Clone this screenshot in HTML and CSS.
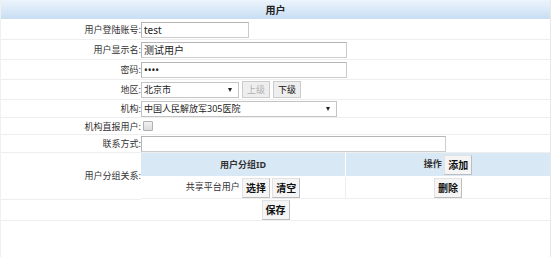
FILE: index.html
```html
<!DOCTYPE html>
<html lang="zh">
<head>
  <meta charset="UTF-8" />
  <title>用户</title>
  <link rel="stylesheet" href="styles.css">
</head>
<body>

  <!-- Benutzerformular -->
  <div class="panel">
    <table class="form-table">
      <tr class="head">
        <th colspan="2">用户</th>
      </tr>
      <tr class="r20">
        <td class="label">用户登陆账号:</td>
        <td><input type="text" class="inp w108" value="test" /></td>
      </tr>
      <tr class="r20">
        <td class="label">用户显示名:</td>
        <td><input type="text" class="inp w206" value="测试用户" /></td>
      </tr>
      <tr class="r20">
        <td class="label">密码:</td>
        <td><input type="password" class="inp w206" value="test" /></td>
      </tr>
      <tr class="r20">
        <td class="label">地区:</td>
        <td>
          <div class="line">
            <span class="sel w98"><select><option>北京市</option></select></span>
            <button type="button" class="btn light" disabled>上级</button>
            <button type="button" class="btn light">下级</button>
          </div>
        </td>
      </tr>
      <tr class="r18">
        <td class="label">机构:</td>
        <td><span class="sel w196"><select><option>中国人民解放军305医院</option></select></span></td>
      </tr>
      <tr class="r17">
        <td class="label">机构直报用户:</td>
        <td><span class="check"></span></td>
      </tr>
      <tr class="r18">
        <td class="label">联系方式:</td>
        <td><input type="text" class="inp w305" /></td>
      </tr>
      <tr class="r46">
        <td class="label">用户分组关系:</td>
        <td class="nopad">
          <!-- Gruppenzuordnung -->
          <table class="groups">
            <tr class="ghead">
              <th class="c1">用户分组ID</th>
              <th>操作 <button type="button" class="btn">添加</button></th>
            </tr>
            <tr class="grow">
              <td class="c1">共享平台用户 <button type="button" class="btn">选择</button> <button type="button" class="btn">清空</button></td>
              <td><button type="button" class="btn">删除</button></td>
            </tr>
          </table>
        </td>
      </tr>
      <tr class="r21">
        <td colspan="2" class="center"><button type="button" class="btn">保存</button></td>
      </tr>
    </table>
  </div>

</body>
</html>
```

FILE: styles.css
```css
body {
  margin: 0;
  padding: 0;
  background-color: #ffffff;
  font-family: "Noto Sans", "Noto Sans CJK SC", sans-serif;
  font-size: 9px;
  color: #333333;
}
.panel {
  width: 551px;
  height: 257px;
  border-right: 1px solid #e8e8e8;
  border-left: 1px solid #f0f0f0;
  box-sizing: border-box;
}
.form-table {
  width: 100%;
  border-collapse: collapse;
}
.form-table td, .form-table th {
  padding: 0;
  border-bottom: 1px solid #eeeeee;
  vertical-align: middle;
}
.form-table tr.head th {
  height: 19px;
  background: linear-gradient(#ecf4fc, #c8def3);
  border-bottom: 1px solid #ffffff;
  font-size: 10px;
  font-weight: bold;
  color: #222222;
}
.r20 td { height: 19px; }
.r18 td { height: 17px; }
.r17 td { height: 16px; }
.r46 td { height: 45px; }
.r21 td { height: 20px; }
.form-table td.label {
  width: 140px;
  text-align: right;
  white-space: nowrap;
}
.form-table td.nopad {
  border-bottom: none;
}
.center {
  text-align: center;
}
.line {
  display: flex;
  align-items: center;
  gap: 3px;
}
.inp {
  display: block;
  height: 16px;
  box-sizing: border-box;
  padding: 0 2px;
  border: 1px solid #cccccc;
  border-top-color: #b5b5b5;
  border-left-color: #b5b5b5;
  font-family: "Noto Sans", "Noto Sans CJK SC", sans-serif;
  font-size: 10px;
  color: #222222;
  margin: 0;
}
.w108 { width: 108px; }
.w206 { width: 206px; }
.w305 { width: 305px; }
.sel {
  position: relative;
  display: block;
  height: 16px;
}
.sel select {
  appearance: none;
  -webkit-appearance: none;
  width: 100%;
  height: 16px;
  box-sizing: border-box;
  border: 1px solid #c4c4c4;
  background-color: #ffffff;
  padding: 0 2px;
  margin: 0;
  font-family: "Noto Sans", "Noto Sans CJK SC", sans-serif;
  font-size: 9px;
  color: #222222;
}
.sel::after {
  content: "";
  position: absolute;
  right: 7px;
  top: 6px;
  border-left: 2px solid transparent;
  border-right: 2px solid transparent;
  border-top: 4px solid #222222;
}
.w98 { width: 98px; }
.w196 { width: 196px; }
.check {
  display: block;
  width: 8px;
  height: 8px;
  margin-left: 2px;
  border: 1px solid #b0b0b0;
  background: linear-gradient(#f2f2f2, #dcdcdc);
  border-radius: 1px;
}
.btn {
  height: 20px;
  padding: 0 3px;
  margin: 0;
  background-color: #f5f5f5;
  border: 1px solid #e2e2e2;
  border-right-color: #bdbdbd;
  border-bottom-color: #bdbdbd;
  font-family: "Noto Sans CJK SC", sans-serif;
  font-size: 10px;
  font-weight: bold;
  color: #111111;
  vertical-align: middle;
}
.btn.light {
  height: 17px;
  font-weight: normal;
  font-size: 9px;
  padding: 0 4px;
  background-color: #eeeeee;
  border-color: #cccccc;
}
.btn.light:disabled {
  color: #b0b0b0;
}
.groups {
  width: 100%;
  border-collapse: collapse;
}
.groups th, .groups td {
  padding: 0;
  text-align: center;
  white-space: nowrap;
}
.groups .ghead th {
  height: 23px;
  background-color: #d9e8f5;
  font-weight: bold;
  font-size: 9px;
  border-bottom: 1px solid #ffffff;
}
.groups .ghead th.c1 {
  width: 204px;
  border-right: 1px solid #ffffff;
}
.groups .grow td {
  height: 21px;
  border-bottom: 1px solid #eeeeee;
}
.groups .grow td.c1 {
  border-right: 1px solid #eeeeee;
}
```
